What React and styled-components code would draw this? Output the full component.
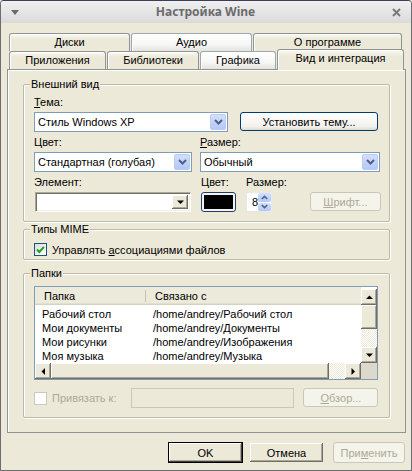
import React from "react";
import styled, { createGlobalStyle } from "styled-components";

const GlobalStyle = createGlobalStyle`
  html, body {
    margin: 0;
    padding: 0;
    background: #ece9d8;
  }
  body {
    font-family: "Liberation Sans", Arial, sans-serif;
    font-size: 11px;
    color: #000;
  }
  * {
    box-sizing: border-box;
  }
`;

const tabs = [
  [
    { label: "Диски", w: 121, kind: "plain" },
    { label: "Аудио", w: 121, kind: "hot" },
    { label: "О программе", w: 149, kind: "plain" },
  ],
  [
    { label: "Приложения", w: 97, kind: "plain" },
    { label: "Библиотеки", w: 92, kind: "plain" },
    { label: "Графика", w: 76, kind: "hot" },
    { label: "Вид и интеграция", w: 127, kind: "active" },
  ],
];

const folders = [
  ["Рабочий стол", "/home/andrey/Рабочий стол"],
  ["Мои документы", "/home/andrey/Документы"],
  ["Мои рисунки", "/home/andrey/Изображения"],
  ["Моя музыка", "/home/andrey/Музыка"],
];

const Chevron = ({ up }) => (
  <svg width="9" height="6" viewBox="0 0 9 6">
    <polyline
      points={up ? "1,5 4.5,1.5 8,5" : "1,1 4.5,4.5 8,1"}
      fill="none"
      stroke="#4d6185"
      strokeWidth="2"
    />
  </svg>
);

const Triangle = ({ dir }) => {
  const pts = {
    up: "0,4 3.5,0.5 7,4",
    down: "0,0.5 3.5,4 7,0.5",
    left: "4,0 0.5,3.5 4,7",
    right: "0.5,0 4,3.5 0.5,7",
  }[dir];
  const vertical = dir === "up" || dir === "down";
  return (
    <svg width={vertical ? 7 : 5} height={vertical ? 5 : 7} viewBox={vertical ? "0 0 7 5" : "0 0 5 7"}>
      <polygon points={pts} fill="#000" />
    </svg>
  );
};

const Check = () => (
  <svg width="9" height="9" viewBox="0 0 9 9">
    <polyline points="1,4.5 3.3,7 8,1.8" fill="none" stroke="#21a121" strokeWidth="2" />
  </svg>
);

const App = () => {
  return (
    <>
      <GlobalStyle />
      <Window>
        <TitleBar>
          <svg width="8" height="5" viewBox="0 0 8 5">
            <polygon points="0,0 8,0 4,5" fill="#6a6a6a" />
          </svg>
          <Title>Настройка Wine</Title>
          <svg width="9" height="9" viewBox="0 0 9 9">
            <path d="M1 1 L8 8 M8 1 L1 8" stroke="#7a7a7a" strokeWidth="2" />
          </svg>
        </TitleBar>
        <Body>
          <TabStrip>
            {tabs.map((row, i) => (
              <TabRow key={i}>
                {row.map((t) => (
                  <Tab key={t.label} $w={t.w} $kind={t.kind}>
                    {t.label}
                  </Tab>
                ))}
              </TabRow>
            ))}
          </TabStrip>
          <Panel>
            <Group>
              <GroupTitle>Внешний вид</GroupTitle>
              <AppearanceBody>
                <FieldRow $gap={12}>
                  <Field>
                    <Label>
                      <u>Т</u>ема:
                    </Label>
                    <Combo $w={194}>
                      <ComboText>Стиль Windows XP</ComboText>
                      <ComboArrow>
                        <Chevron />
                      </ComboArrow>
                    </Combo>
                  </Field>
                  <XPButton $w={138}>Установить тему...</XPButton>
                </FieldRow>
                <FieldRow $gap={8}>
                  <Field>
                    <Label>Цвет:</Label>
                    <Combo $w={158}>
                      <ComboText>Стандартная (голубая)</ComboText>
                      <ComboArrow>
                        <Chevron />
                      </ComboArrow>
                    </Combo>
                  </Field>
                  <Field>
                    <Label>
                      <u>Р</u>азмер:
                    </Label>
                    <Combo $w={180}>
                      <ComboText>Обычный</ComboText>
                      <ComboArrow>
                        <Chevron />
                      </ComboArrow>
                    </Combo>
                  </Field>
                </FieldRow>
                <FieldRow $gap={10}>
                  <Field $indent={1}>
                    <Label $indent={-1}>Элемент:</Label>
                    <ClassicCombo $w={156}>
                      <ClassicArrow>
                        <Triangle dir="down" />
                      </ClassicArrow>
                    </ClassicCombo>
                  </Field>
                  <Field>
                    <Label>Цвет:</Label>
                    <ColorButton>
                      <Swatch />
                    </ColorButton>
                  </Field>
                  <Field>
                    <Label>Размер:</Label>
                    <Spin>
                      <SpinValue>8</SpinValue>
                      <SpinButtons>
                        <SpinButton>
                          <Chevron up />
                        </SpinButton>
                        <SpinButton>
                          <Chevron />
                        </SpinButton>
                      </SpinButtons>
                    </Spin>
                  </Field>
                  <XPButton $w={83} $disabled $ml={13}>
                    <span>
                      <u>Ш</u>рифт...
                    </span>
                  </XPButton>
                </FieldRow>
              </AppearanceBody>
            </Group>

            <Group $mt={7}>
              <GroupTitle>Типы MIME</GroupTitle>
              <MimeBody>
                <CheckRow>
                  <CheckBox>
                    <Check />
                  </CheckBox>
                  <span>
                    Управлять <u>а</u>ссоциациями файлов
                  </span>
                </CheckRow>
              </MimeBody>
            </Group>

            <Group $mt={13}>
              <GroupTitle>Папки</GroupTitle>
              <FoldersBody>
                <ListView>
                  <ListHeader>
                    <HeadCell $w={111}>Папка</HeadCell>
                    <HeadCell>Связано с</HeadCell>
                  </ListHeader>
                  <VScroll>
                    <ScrollButton>
                      <Triangle dir="up" />
                    </ScrollButton>
                    <Thumb $size={24} />
                    <Track />
                    <ScrollButton>
                      <Triangle dir="down" />
                    </ScrollButton>
                  </VScroll>
                  <ListRows>
                    {folders.map(([name, path]) => (
                      <ListRow key={name}>
                        <Cell $w={111}>{name}</Cell>
                        <Cell>{path}</Cell>
                      </ListRow>
                    ))}
                  </ListRows>
                  <HScroll>
                    <ScrollButton>
                      <Triangle dir="left" />
                    </ScrollButton>
                    <Thumb $size={278} />
                    <Track />
                    <ScrollButton>
                      <Triangle dir="right" />
                    </ScrollButton>
                  </HScroll>
                  <Corner />
                </ListView>
                <BindRow>
                  <CheckRow $disabled>
                    <CheckBox $disabled />
                    <span>Привязать к:</span>
                  </CheckRow>
                  <DisabledInput />
                  <XPButton $w={75} $disabled>
                    <span>
                      <u>О</u>бзор...
                    </span>
                  </XPButton>
                </BindRow>
              </FoldersBody>
            </Group>
          </Panel>
          <Footer>
            <DialogButton $default>OK</DialogButton>
            <DialogButton>Отмена</DialogButton>
            <XPButton $w={72} $h={21} $disabled $ml={3}>
              <span>
                При<u>м</u>енить
              </span>
            </XPButton>
          </Footer>
        </Body>
      </Window>
    </>
  );
};
export default App;

const Window = styled.div`
  width: 412px;
  height: 471px;
  border: 1px solid #6c6d72;
  border-top-color: #3b3f5c;
  border-radius: 4px 4px 0 0;
  overflow: hidden;
  display: flex;
  flex-direction: column;
  background: #ece9d8;
`;

const TitleBar = styled.div`
  height: 22px;
  flex-shrink: 0;
  display: grid;
  grid-template-columns: 28px 1fr 28px;
  align-items: center;
  justify-items: center;
  padding: 0 1px 0 0;
  background: linear-gradient(#f0f0f0, #dadada);
`;

const Title = styled.div`
  font-family: "Noto Sans", "DejaVu Sans", sans-serif;
  font-weight: bold;
  font-size: 12px;
  line-height: 14px;
  color: #6b6b6b;
`;

const Body = styled.div`
  flex: 1;
  display: flex;
  flex-direction: column;
  padding: 10px 5px 0 6px;
`;

const TabStrip = styled.div`
  display: flex;
  flex-direction: column;
  padding-left: 2px;
`;

const TabRow = styled.div`
  display: flex;
  gap: 1px;
  height: 18px;
`;

const Tab = styled.div`
  position: relative;
  z-index: ${(p) => (p.$kind === "active" ? 1 : 0)};
  width: ${(p) => p.$w}px;
  height: ${(p) => (p.$kind === "active" ? 21 : 18)}px;
  margin-top: ${(p) => (p.$kind === "active" ? -2 : 0)}px;
  border: 1px solid ${(p) => (p.$kind === "hot" ? "#9aa8b6" : "#8f9596")};
  border-bottom: none;
  border-radius: 3px 3px 0 0;
  background: ${(p) =>
    p.$kind === "hot"
      ? "linear-gradient(#ffffff, #f7f7f5 60%, #e4e3dc)"
      : "linear-gradient(#fbfaf4, #ece9d8 30%, #ece9d8)"};
  box-shadow: inset 1px 1px #ffffff;
  text-align: center;
  line-height: 17px;
  white-space: nowrap;
`;

const Panel = styled.div`
  flex: 1;
  display: flex;
  flex-direction: column;
  border: 1px solid #8f9596;
  box-shadow: inset 1px 1px #ffffff;
  padding: 14px 15px 0 15px;
`;

const Group = styled.section`
  margin-top: ${(p) => p.$mt || 0}px;
  border: 1px solid #bdbaa9;
  border-radius: 2px;
  box-shadow: inset 1px 1px #ffffff, 1px 1px #ffffff;
  display: flex;
  flex-direction: column;
`;

const GroupTitle = styled.span`
  align-self: flex-start;
  margin: -7px 0 0 6px;
  padding: 0 1px;
  background: #ece9d8;
  line-height: 13px;
  white-space: nowrap;
`;

const AppearanceBody = styled.div`
  display: flex;
  flex-direction: column;
  gap: 4px;
  padding: 5px 8px 9px 10px;
`;

const FieldRow = styled.div`
  display: flex;
  align-items: flex-end;
  gap: ${(p) => p.$gap}px;
`;

const Field = styled.div`
  display: flex;
  flex-direction: column;
  gap: 3px;
  padding-left: ${(p) => p.$indent || 0}px;
`;

const Label = styled.div`
  line-height: 13px;
  white-space: nowrap;
  margin-left: ${(p) => p.$indent || 0}px;
`;

const Combo = styled.div`
  width: ${(p) => p.$w}px;
  height: 20px;
  border: 1px solid #7f9db9;
  background: #fff;
  padding: 1px;
  display: flex;
  align-items: stretch;
`;

const ComboText = styled.span`
  flex: 1;
  padding-left: 2px;
  line-height: 16px;
  white-space: nowrap;
  overflow: hidden;
`;

const ComboArrow = styled.span`
  width: 16px;
  border: 1px solid #bccbf2;
  border-radius: 2px;
  background: linear-gradient(#d2defb, #b4c8f6);
  display: flex;
  align-items: center;
  justify-content: center;
`;

const ClassicCombo = styled.div`
  width: ${(p) => p.$w}px;
  height: 20px;
  background: #fff;
  border: 1px solid;
  border-color: #aca899 #ffffff #ffffff #aca899;
  box-shadow: inset 1px 1px #716f64, inset -1px -1px #f1efe2;
  padding: 2px;
  display: flex;
  justify-content: flex-end;
`;

const ClassicArrow = styled.span`
  width: 16px;
  background: #ece9d8;
  box-shadow: inset -1px -1px #716f64, inset 1px 1px #ffffff, inset -2px -2px #aca899;
  display: flex;
  align-items: center;
  justify-content: center;
`;

const ColorButton = styled.div`
  width: 35px;
  height: 20px;
  border: 1px solid #1c3e6e;
  border-radius: 3px;
  padding: 2px;
  background: #f4f3ee;
  display: flex;
`;

const Swatch = styled.div`
  flex: 1;
  background: #000;
`;

const Spin = styled.div`
  width: 26px;
  height: 20px;
  display: flex;
  background: #fff;
  border: 1px solid #e4e9f1;
`;

const SpinValue = styled.span`
  width: 11px;
  padding-left: 5px;
  line-height: 18px;
`;

const SpinButtons = styled.div`
  flex: 1;
  display: flex;
  flex-direction: column;
  gap: 1px;
`;

const SpinButton = styled.span`
  flex: 1;
  border-radius: 2px;
  background: linear-gradient(#d2defb, #b4c8f6);
  display: flex;
  align-items: center;
  justify-content: center;
  svg {
    width: 7px;
    height: 5px;
  }
`;

const XPButton = styled.div`
  width: ${(p) => p.$w}px;
  height: ${(p) => p.$h || 19}px;
  margin-left: ${(p) => p.$ml || 0}px;
  align-self: ${(p) => (p.$h ? "auto" : "flex-end")};
  margin-bottom: ${(p) => (p.$h ? 0 : 1)}px;
  border: 1px solid ${(p) => (p.$disabled ? "#c9c7ba" : "#003c74")};
  border-radius: 3px;
  background: ${(p) =>
    p.$disabled ? "#f5f4ea" : "linear-gradient(#ffffff, #f2f1ec 80%, #dcd9cd)"};
  color: ${(p) => (p.$disabled ? "#aca899" : "#000")};
  display: flex;
  align-items: center;
  justify-content: center;
  white-space: nowrap;
`;

const MimeBody = styled.div`
  padding: 7px 10px 3px 10px;
`;

const CheckRow = styled.div`
  display: flex;
  align-items: center;
  gap: 5px;
  height: 13px;
  color: ${(p) => (p.$disabled ? "#aca899" : "#000")};
  white-space: nowrap;
`;

const CheckBox = styled.span`
  width: 13px;
  height: 13px;
  flex-shrink: 0;
  border: 1px solid ${(p) => (p.$disabled ? "#cac8bb" : "#1c5180")};
  background: ${(p) =>
    p.$disabled ? "#fff" : "linear-gradient(135deg, #dcdcd7, #ffffff)"};
  display: flex;
  align-items: center;
  justify-content: center;
`;

const FoldersBody = styled.div`
  display: flex;
  flex-direction: column;
  gap: 8px;
  padding: 6px 9px 9px 10px;
`;

const ListView = styled.div`
  width: 344px;
  height: 94px;
  border: 1px solid #7f9db9;
  background: #fff;
  display: grid;
  grid-template-columns: 1fr 16px;
  grid-template-rows: 18px 1fr 16px;
`;

const ListHeader = styled.div`
  grid-column: 1;
  grid-row: 1;
  display: flex;
  align-items: center;
  background: #ebeadb;
  box-shadow: inset 0 -1px #d6d2c2, inset 0 -2px #e2dfd1;
`;

const HeadCell = styled.div`
  width: ${(p) => (p.$w ? `${p.$w}px` : "auto")};
  flex: ${(p) => (p.$w ? "none" : 1)};
  padding-left: 9px;
  line-height: 12px;
  border-right: ${(p) => (p.$w ? "1px solid #c7c5b2" : "none")};
`;

const ListRows = styled.div`
  grid-column: 1;
  grid-row: 2;
  padding-top: 2px;
  overflow: hidden;
`;

const ListRow = styled.div`
  display: flex;
  height: 14px;
  line-height: 14px;
  white-space: nowrap;
`;

const Cell = styled.div`
  width: ${(p) => (p.$w ? `${p.$w}px` : "auto")};
  flex: ${(p) => (p.$w ? "none" : 1)};
  padding-left: 7px;
`;

const VScroll = styled.div`
  grid-column: 2;
  grid-row: 1 / span 2;
  display: flex;
  flex-direction: column;
  padding-top: 2px;
`;

const HScroll = styled.div`
  grid-column: 1;
  grid-row: 3;
  display: flex;
`;

const raised = `
  background: #ece9d8;
  box-shadow: inset -1px -1px #716f64, inset 1px 1px #ffffff, inset -2px -2px #aca899;
`;

const ScrollButton = styled.div`
  ${raised}
  width: 16px;
  height: 16px;
  flex-shrink: 0;
  display: flex;
  align-items: center;
  justify-content: center;
`;

const Thumb = styled.div`
  ${raised}
  flex: 0 0 ${(p) => p.$size}px;
`;

const Track = styled.div`
  flex: 1;
  background: repeating-conic-gradient(#ffffff 0 25%, #ece9d8 0 50%) 0 0 / 2px 2px;
`;

const Corner = styled.div`
  grid-column: 2;
  grid-row: 3;
  background: #dcd8cb;
`;

const BindRow = styled.div`
  display: flex;
  align-items: center;
`;

const DisabledInput = styled.div`
  width: 163px;
  height: 20px;
  margin-left: 15px;
  margin-right: 9px;
  border: 1px solid #c9c7ba;
  background: #ece9d8;
`;

const Footer = styled.div`
  display: flex;
  justify-content: flex-end;
  gap: 6px;
  margin: 9px 1px 7px 0;
`;

const DialogButton = styled.div`
  width: 75px;
  height: 21px;
  background: #ece9d8;
  border: 1px solid ${(p) => (p.$default ? "#000" : "transparent")};
  box-shadow: ${(p) =>
    p.$default
      ? "inset -1px -1px #404040, inset 1px 1px #ffffff, inset -2px -2px #aca899"
      : "inset -1px -1px #716f64, inset 1px 1px #ffffff, inset -2px -2px #aca899"};
  display: flex;
  align-items: center;
  justify-content: center;
`;
